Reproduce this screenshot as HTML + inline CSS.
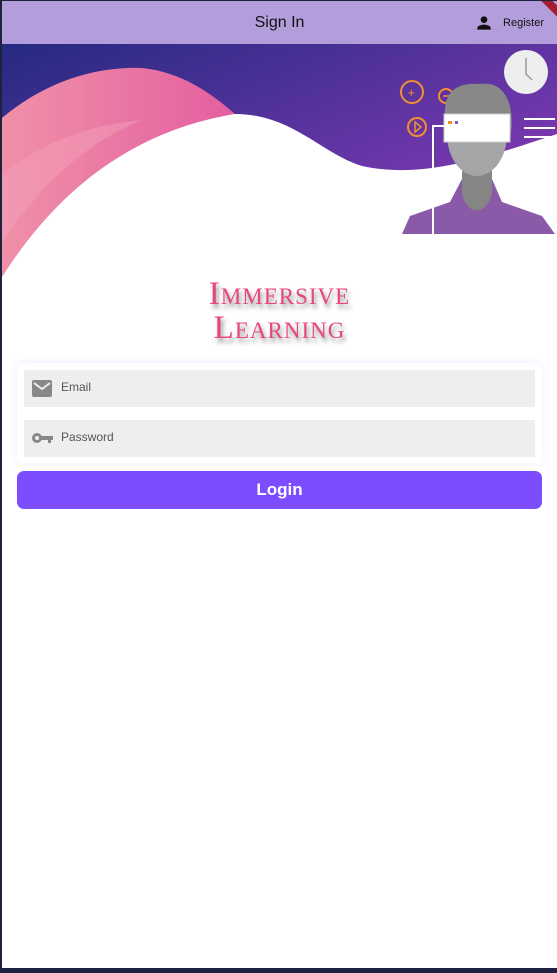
<!DOCTYPE html><html><head><style>
body{margin:0;width:557px;height:973px;background:#1e2240;position:relative;overflow:hidden;font-family:"Liberation Sans",sans-serif}
#app{position:absolute;left:2px;top:1px;width:555px;height:967px;background:#fff;overflow:hidden}
#bar{position:absolute;left:0;top:0;width:555px;height:43px;background:#b39ddb;}
#bar .t{position:absolute;left:0;width:555px;top:13px;text-align:center;font-size:16px;color:#111}
#bar .r{position:absolute;right:13px;top:16px;font-size:11px;color:#111}
.title{position:absolute;left:0;width:555px;text-align:center;font-family:"Liberation Serif",serif;font-variant:small-caps;color:#e8457e;font-size:33px;line-height:34px;top:276px;text-shadow:2px 4px 5px rgba(0,0,0,.45);letter-spacing:1px}
.card{position:absolute;left:15px;top:362px;width:525px;height:100px;background:#fff;border-radius:6px;box-shadow:0 0 8px rgba(120,100,255,.12)}
.f{position:absolute;left:7px;width:511px;height:37px;background:#eee;font-size:12px;color:#555}
.f span{position:absolute;left:37px;top:10px}
.btn{position:absolute;left:15px;top:470px;width:525px;height:38px;background:#7c4dff;border-radius:7px;color:#fff;font-weight:bold;font-size:17px;text-align:center;line-height:38px}
</style></head><body><div id="app">
<svg style="position:absolute;left:0;top:43px" width="555" height="233" viewBox="0 0 555 233">
<defs><linearGradient id="g" x1="0" y1="0" x2="1" y2="1"><stop offset="0" stop-color="#252a80"/><stop offset=".6" stop-color="#6a36a8"/><stop offset="1" stop-color="#a040b8"/></linearGradient>
<linearGradient id="p" x1="0" y1="0" x2="1" y2="0"><stop offset="0" stop-color="#f090a8"/><stop offset="1" stop-color="#e35fa0"/></linearGradient></defs>
<rect width="555" height="233" fill="url(#g)"/>
<path d="M0 74 C40 40 90 22 140 24 C180 28 210 50 233 70 L0 233Z" fill="url(#p)"/>
<path d="M0 233 C40 170 110 90 233 70 C290 70 320 110 360 122 C420 135 480 115 555 90 L555 233Z" fill="#fff"/>
<path d="M0 130 C40 100 80 82 140 76 C80 100 30 150 0 200Z" fill="#f4a0b8" opacity=".5"/>
<g transform="translate(398,0)">
<circle cx="126" cy="28" r="22" fill="#eee"/><path d="M126 14 V30 L132 36" stroke="#999" stroke-width="1.5" fill="none"/>
<circle cx="12" cy="48" r="11" fill="none" stroke="#f09030" stroke-width="2"/><text x="7.5" y="53" font-size="13" fill="#f09030">+</text>
<circle cx="46" cy="52" r="7" fill="none" stroke="#f09030" stroke-width="2"/><path d="M43 52 H49" stroke="#f09030" stroke-width="1.5"/>
<circle cx="17" cy="83" r="9" fill="none" stroke="#f09030" stroke-width="2"/><path d="M15 78 L21 83 L15 88Z" fill="none" stroke="#f09030" stroke-width="1.5"/>
<path d="M2 190 L10 172 L50 158 L62 135 L92 135 L102 158 L142 172 L155 190Z" fill="#8a5aa8"/>
<path d="M62 120 H92 V150 C85 172 68 172 62 150Z" fill="#858585"/>
<ellipse cx="77" cy="90" rx="30" ry="42" fill="#a5a5a8"/>
<path d="M46 80 C40 45 60 38 80 40 C110 36 115 70 110 95 L46 95Z" fill="#888"/>
<rect x="44" y="70" width="66" height="28" fill="#fff" stroke="#ccc"/>
<rect x="48" y="77" width="4" height="3" fill="#f09030"/><rect x="55" y="77" width="3" height="3" fill="#8a5aa8"/>
<path d="M44 82 H33 V190" stroke="#fff" stroke-width="2" fill="none"/>
<path d="M124 75 H155 M124 84 H155 M124 93 H155" stroke="#fff" stroke-width="2"/>
</g></svg>
<div id="bar"><div class="t">Sign In</div>
<svg style="position:absolute;left:472px;top:12px" width="20" height="20" viewBox="0 0 24 24"><path d="M12 12c2.2 0 4-1.8 4-4s-1.8-4-4-4-4 1.8-4 4 1.8 4 4 4zm0 2c-2.7 0-8 1.3-8 4v2h16v-2c0-2.7-5.3-4-8-4z" fill="#111"/></svg>
<div class="r">Register</div>
<div style="position:absolute;right:-12px;top:-2px;width:40px;height:8px;background:#a02030;transform:rotate(45deg)"></div></div>
<div class="title">Immersive<br>Learning</div>
<div class="card">
<div class="f" style="top:7px"><svg style="position:absolute;left:8px;top:10px" width="20" height="17" viewBox="0 0 20 17"><rect width="20" height="17" rx="2" fill="#888"/><path d="M2 3 L10 9 L18 3" stroke="#eee" stroke-width="2" fill="none"/></svg><span>Email</span></div>
<div class="f" style="top:57px"><svg style="position:absolute;left:7px;top:12px" width="22" height="12" viewBox="0 0 22 12"><circle cx="6" cy="6" r="5" fill="#888"/><circle cx="6" cy="6" r="2" fill="#eee"/><rect x="10" y="4" width="12" height="4" fill="#888"/><rect x="17" y="7" width="3" height="4" fill="#888"/></svg><span>Password</span></div>
</div>
<div class="btn">Login</div>
</div></body></html>
